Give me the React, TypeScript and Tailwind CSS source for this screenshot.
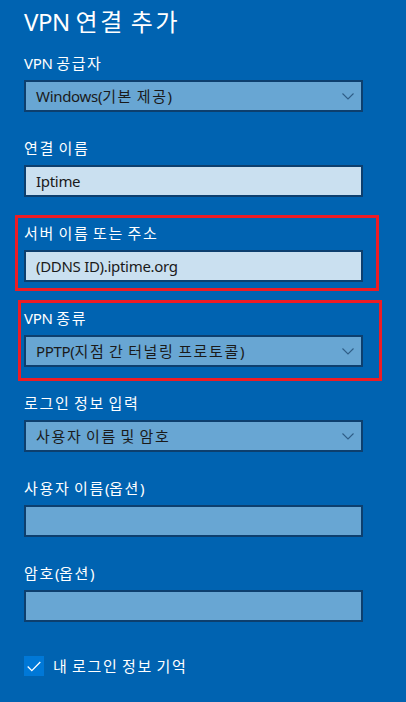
import React from "react";

const font = { fontFamily: '"Noto Sans", "Noto Sans CJK KR", sans-serif' };

function T({ text }: { text: string }) {
  const parts = text.split(/([\uAC00-\uD7A3\u3131-\u318E]+)/).filter((p) => p.length > 0);
  return (
    <>
      {parts.map((p, i) =>
        /[\uAC00-\uD7A3\u3131-\u318E]/.test(p) ? (
          <span key={i} className="tracking-[0.11em]">
            {p}
          </span>
        ) : (
          <span key={i} className="tracking-[-0.02em]">
            {p}
          </span>
        )
      )}
    </>
  );
}

function Chevron() {
  return (
    <svg width="12" height="7" viewBox="0 0 12 7" className="shrink-0">
      <polyline points="0.5,0.5 6,6 11.5,0.5" fill="none" stroke="#2f5d86" strokeWidth="1.1" />
    </svg>
  );
}

function Select({ value }: { value: string }) {
  return (
    <div className="mt-[7px] h-[32px] w-[339px] border-2 border-[#0d3f6e] bg-[#68a6d3] flex items-center justify-between pl-[10px] pr-[7px]">
      <span className="text-[15px] leading-[20px] text-[#1a1a1a] whitespace-nowrap">
        <T text={value} />
      </span>
      <Chevron />
    </div>
  );
}

function Input({ value, filled }: { value?: string; filled?: boolean }) {
  return (
    <div
      className={
        "mt-[7px] h-[32px] w-[339px] border-2 border-[#0d3f6e] flex items-center pl-[10px] " +
        (filled ? "bg-[#cae0f0]" : "bg-[#68a6d3]")
      }
    >
      <span className="text-[15px] leading-[20px] text-[#1a1a1a] whitespace-nowrap">
        {value ? <T text={value} /> : null}
      </span>
    </div>
  );
}

function Label({ text, first }: { text: string; first?: boolean }) {
  return (
    <div className={"text-[15px] leading-[20px] text-white whitespace-nowrap " + (first ? "mt-[15px]" : "mt-[26px]")}>
      <T text={text} />
    </div>
  );
}

export default function App() {
  return (
    <div className="relative w-[406px] h-[702px] overflow-hidden bg-[#0063b1] px-[24px]" style={font}>
      <div className="pt-[6px] text-[24px] leading-[32px] text-white whitespace-nowrap">
        <T text="VPN 연결 추가" />
      </div>

      <Label text="VPN 공급자" first />
      <Select value="Windows(기본 제공)" />

      <Label text="연결 이름" />
      <Input value="Iptime" filled />

      <Label text="서버 이름 또는 주소" />
      <Input value="(DDNS ID).iptime.org" filled />

      <Label text="VPN 종류" />
      <Select value="PPTP(지점 간 터널링 프로토콜)" />

      <Label text="로그인 정보 입력" />
      <Select value="사용자 이름 및 암호" />

      <Label text="사용자 이름(옵션)" />
      <Input />

      <Label text="암호(옵션)" />
      <Input />

      <div className="mt-[34px] flex items-center gap-[9px]">
        <div className="w-[20px] h-[20px] bg-[#0078d7] flex items-center justify-center">
          <svg width="14" height="11" viewBox="0 0 14 11">
            <polyline points="0.7,5.5 4.8,9.6 13.3,1" fill="none" stroke="#ffffff" strokeWidth="1.3" />
          </svg>
        </div>
        <span className="text-[15px] leading-[20px] text-white whitespace-nowrap">
          <T text="내 로그인 정보 기억" />
        </span>
      </div>

      {/* red annotation boxes */}
      <div className="absolute left-[15px] top-[215px] w-[364px] h-[76px] border-[3px] border-[#ed1c24]" />
      <div className="absolute left-[18px] top-[300px] w-[364px] h-[81px] border-[3px] border-[#ed1c24]" />
    </div>
  );
}
